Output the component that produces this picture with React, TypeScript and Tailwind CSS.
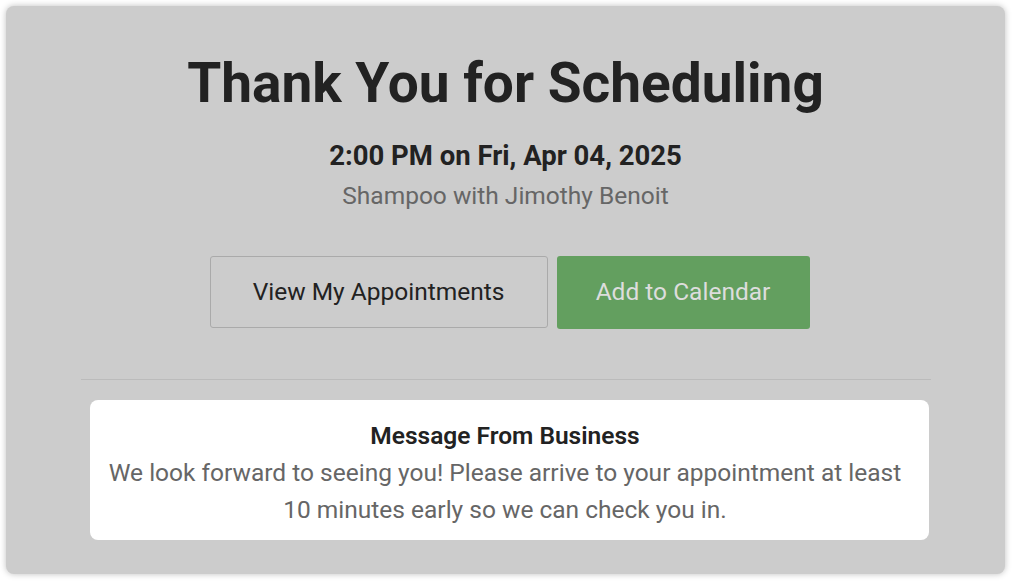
export default function App() {
  return (
    <div className="min-h-screen bg-white p-[6px] font-['Roboto',sans-serif]">
      <div className="flex h-[568px] w-[999px] flex-col items-center rounded-[8px] bg-[#cccccc] pt-[45px] shadow-[0_0_6px_rgba(0,0,0,0.25)]">
        <h1 className="text-[55px] font-bold leading-[65px] text-[#222222]">Thank You for Scheduling</h1>
        <p className="mt-[24px] text-[27.5px] font-bold leading-[32px] text-[#222222]">2:00 PM on Fri, Apr 04, 2025</p>
        <p className="mt-[10px] text-[24.5px] leading-[28px] text-[#666666]">Shampoo with Jimothy Benoit</p>

        <div className="ml-[8px] mt-[46px] flex gap-[9px]">
          <button className="h-[72px] w-[338px] rounded-[3px] border border-[#aaaaaa] text-[24.5px] text-[#222222]">
            View My Appointments
          </button>
          <button className="h-[73px] w-[253px] rounded-[3px] bg-[#639f5f] text-[24.5px] text-[#dddddd]">
            Add to Calendar
          </button>
        </div>

        <div className="mt-[50px] w-[850px]">
          <div className="h-px bg-[#bbbbbb]" />
          <div className="ml-[9px] mr-[2px] mt-[20px] rounded-[8px] bg-white pb-[12px] pl-[10px] pr-[18px] pt-[17px] text-center text-[24.5px] leading-[37px]">
            <p className="font-semibold text-[#222222]">Message From Business</p>
            <p className="text-[#666666]">
              We look forward to seeing you! Please arrive to your appointment at least 10 minutes early so we can check you in.
            </p>
          </div>
        </div>
      </div>
    </div>
  );
}
